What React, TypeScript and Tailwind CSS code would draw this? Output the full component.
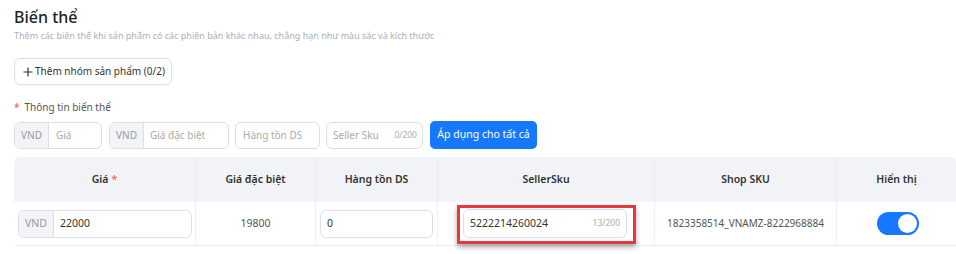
import React from "react";

const font = { fontFamily: '"Noto Sans", "Open Sans", sans-serif' };

export default function App() {
  return (
    <div className="w-[956px] h-[254px] bg-white overflow-hidden text-[#333] whitespace-nowrap" style={font}>
      <div className="pl-[14px] pt-[5px]">
        <h2 className="text-[16px] font-medium leading-[24px] text-[#222]">Biến thể</h2>
        <p className="text-[9px] leading-[12px] text-[#aab0b8] mt-[1px]">
          Thêm các biến thể khi sản phẩm có các phiên bản khác nhau, chẳng hạn như màu sắc và kích thước
        </p>
        <button className="mt-[16px] h-[27px] w-[158px] flex items-center gap-[2px] pl-[8px] pr-[6px] rounded-[6px] border border-[#dcdfe4] bg-white text-[10px] text-[#333] shadow-[0_1px_1px_rgba(0,0,0,0.03)]">
          <svg width="10" height="10" viewBox="0 0 10 10" className="shrink-0">
            <path d="M5 0.5V9.5M0.5 5H9.5" stroke="#333" strokeWidth="1.2" />
          </svg>
          <span>Thêm nhóm sản phẩm (0/2)</span>
        </button>
        <div className="mt-[15px] text-[10px] leading-[14px] text-[#555] flex items-center gap-[5px]">
          <span className="text-[#ff4d4f]">*</span>
          <span>Thông tin biến thể</span>
        </div>
        <div className="mt-[7px] flex items-center h-[28px]">
          <div className="w-[88px] h-[27px] flex rounded-[6px] border border-[#dcdfe4] overflow-hidden text-[10px]">
            <div className="w-[34px] bg-[#f3f4f7] border-r border-[#dcdfe4] flex items-center justify-center text-[#999]">VND</div>
            <div className="flex-1 flex items-center pl-[7px] text-[#aaa]">Giá</div>
          </div>
          <div className="ml-[7px] w-[120px] h-[27px] flex rounded-[6px] border border-[#dcdfe4] overflow-hidden text-[10px]">
            <div className="w-[34px] bg-[#f3f4f7] border-r border-[#dcdfe4] flex items-center justify-center text-[#999]">VND</div>
            <div className="flex-1 flex items-center pl-[6px] text-[#aaa]">Giá đặc biệt</div>
          </div>
          <div className="ml-[6px] w-[85px] h-[27px] flex items-center rounded-[6px] border border-[#dcdfe4] pl-[7px] text-[10px] text-[#aaa]">
            Hàng tồn DS
          </div>
          <div className="ml-[6px] w-[97px] h-[27px] flex items-center justify-between rounded-[6px] border border-[#dcdfe4] pl-[6px] pr-[5px] text-[10px] text-[#aaa]">
            <span>Seller Sku</span>
            <span className="text-[8.5px] text-[#aaa]">0/200</span>
          </div>
          <button className="ml-[7px] w-[107px] h-[28px] rounded-[5px] bg-[#1677ff] text-white text-[10.5px] flex items-center justify-center">
            Áp dụng cho tất cả
          </button>
        </div>

        <div className="mt-[8px] w-[942px] text-[10.5px]">
          <div className="flex h-[45px] bg-[#f2f3f6] rounded-t-[6px] font-semibold text-[#333]">
            <div className="w-[182px] flex items-center justify-center gap-[3px] border-r border-[#e8e9ed]">
              Giá <span className="text-[#ff4d4f] font-normal">*</span>
            </div>
            <div className="w-[120px] flex items-center justify-center border-r border-[#e8e9ed]">Giá đặc biệt</div>
            <div className="w-[122px] flex items-center justify-center border-r border-[#e8e9ed]">Hàng tồn DS</div>
            <div className="w-[217px] flex items-center justify-center border-r border-[#e8e9ed]">SellerSku</div>
            <div className="w-[182px] flex items-center justify-center border-r border-[#e8e9ed]">Shop SKU</div>
            <div className="w-[119px] flex items-center justify-center">Hiển thị</div>
          </div>
          <div className="flex h-[44px] border-b border-[#eceef1]">
            <div className="w-[182px] flex items-center pl-[4px] pr-[3px] border-r border-[#f0f1f3]">
              <div className="w-full h-[28px] flex rounded-[6px] border border-[#dcdfe4] overflow-hidden">
                <div className="w-[35px] bg-[#f3f4f7] border-r border-[#dcdfe4] flex items-center justify-center text-[#999]">VND</div>
                <div className="flex-1 flex items-center pl-[6px] text-[#333]">22000</div>
              </div>
            </div>
            <div className="w-[120px] flex items-center justify-center text-[#555] border-r border-[#f0f1f3]">19800</div>
            <div className="w-[122px] flex items-center pl-[4px] pr-[4px] border-r border-[#f0f1f3]">
              <div className="w-full h-[28px] flex items-center rounded-[6px] border border-[#dcdfe4] pl-[6px] text-[#333]">0</div>
            </div>
            <div className="w-[217px] flex items-center justify-center border-r border-[#f0f1f3]">
              <div className="relative w-[164px] h-[29px] -ml-[2px] flex items-center justify-between rounded-[6px] border border-[#dcdfe4] pl-[6px] pr-[6px]">
                <span className="text-[#333]">5222214260024</span>
                <span className="text-[8.5px] text-[#aaa]">13/200</span>
                <div className="absolute -left-[7px] -right-[10px] -top-[5px] -bottom-[7px] border-[3px] border-[#e8383d] shadow-[0_3px_5px_rgba(0,0,0,0.35)] pointer-events-none" />
              </div>
            </div>
            <div className="w-[182px] flex items-center justify-center text-[10px] text-[#555] border-r border-[#f0f1f3]">
              1823358514_VNAMZ-8222968884
            </div>
            <div className="w-[119px] flex items-center justify-center">
              <div className="w-[42px] h-[23px] rounded-full bg-[#1677ff] flex items-center justify-end pr-[2px] ml-[3px] -mt-[1px]">
                <div className="w-[19px] h-[19px] rounded-full bg-white" />
              </div>
            </div>
          </div>
        </div>
      </div>
    </div>
  );
}
